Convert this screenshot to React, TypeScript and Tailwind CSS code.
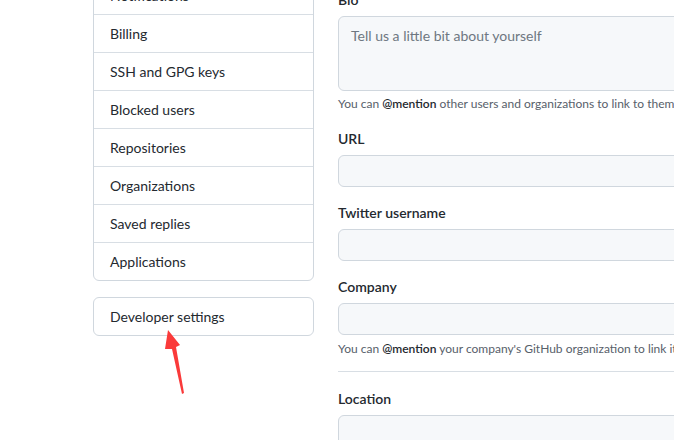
import React from "react";

const items = [
  "Notifications",
  "Billing",
  "SSH and GPG keys",
  "Blocked users",
  "Repositories",
  "Organizations",
  "Saved replies",
  "Applications",
];

const Field = ({ label, children }: { label: string; children: React.ReactNode }) => (
  <div className="mb-[15px]">
    <label className="mb-[6px] block text-sm font-semibold leading-[21px] text-[#24292f]">{label}</label>
    {children}
  </div>
);

const Input = () => (
  <div className="h-[32px] w-[420px] rounded-md border border-[#d0d7de] bg-[#f6f8fa]" />
);

const App = () => {
  return (
    <div
      className="relative h-[440px] w-[674px] overflow-hidden bg-white text-[#24292f]"
      style={{ fontFamily: 'Lato, "Noto Sans", sans-serif' }}
    >
      <div className="flex gap-[24px] pl-[93px]">
        {/* Sidebar */}
        <div className="w-[221px] shrink-0">
          <nav className="-mt-[24px] rounded-md border border-[#d0d7de]">
            {items.map((item, i) => (
              <div
                key={item}
                className={`flex items-center px-4 text-sm ${
                  i < items.length - 1 ? "h-[38px] border-b border-[#d8dee4]" : "h-[37px]"
                }`}
              >
                {item}
              </div>
            ))}
          </nav>
          <div className="mt-[16px] flex h-[39px] items-center rounded-md border border-[#d0d7de] px-4 text-sm">
            Developer settings
          </div>
        </div>

        {/* Main form */}
        <div className="-mt-[11px] min-w-[420px]">
          <div className="mb-[15px]">
            <label className="mb-[6px] block text-sm font-semibold leading-[21px]">Bio</label>
            <div className="h-[75px] w-[420px] rounded-md border border-[#d0d7de] bg-[#f6f8fa] px-3 py-[7px] text-sm leading-[24px] text-[#6e7781]">
              Tell us a little bit about yourself
            </div>
            <p className="mt-[4px] whitespace-nowrap text-xs leading-[18px] text-[#57606a]">
              You can <b className="font-semibold text-[#24292f]">@mention</b> other users and organizations to link to them.
            </p>
          </div>
          <Field label="URL">
            <Input />
          </Field>
          <Field label="Twitter username">
            <Input />
          </Field>
          <div className="mb-[13px]">
            <label className="mb-[6px] block text-sm font-semibold leading-[21px]">Company</label>
            <Input />
            <p className="mt-[5px] whitespace-nowrap text-xs leading-[18px] text-[#57606a]">
              You can <b className="font-semibold text-[#24292f]">@mention</b> your company's GitHub organization to link it.
            </p>
          </div>
          <div className="mb-4 h-px w-[420px] bg-[#d8dee4]" />
          <Field label="Location">
            <Input />
          </Field>
        </div>
      </div>

      {/* Annotation arrow */}
      <svg className="absolute left-0 top-0" width="674" height="440" viewBox="0 0 674 440">
        <polygon
          points="168,330 180,345 176,347 184,393 182,394 172,349 165,349"
          fill="#fa3a3a"
        />
      </svg>
    </div>
  );
};

export default App;
